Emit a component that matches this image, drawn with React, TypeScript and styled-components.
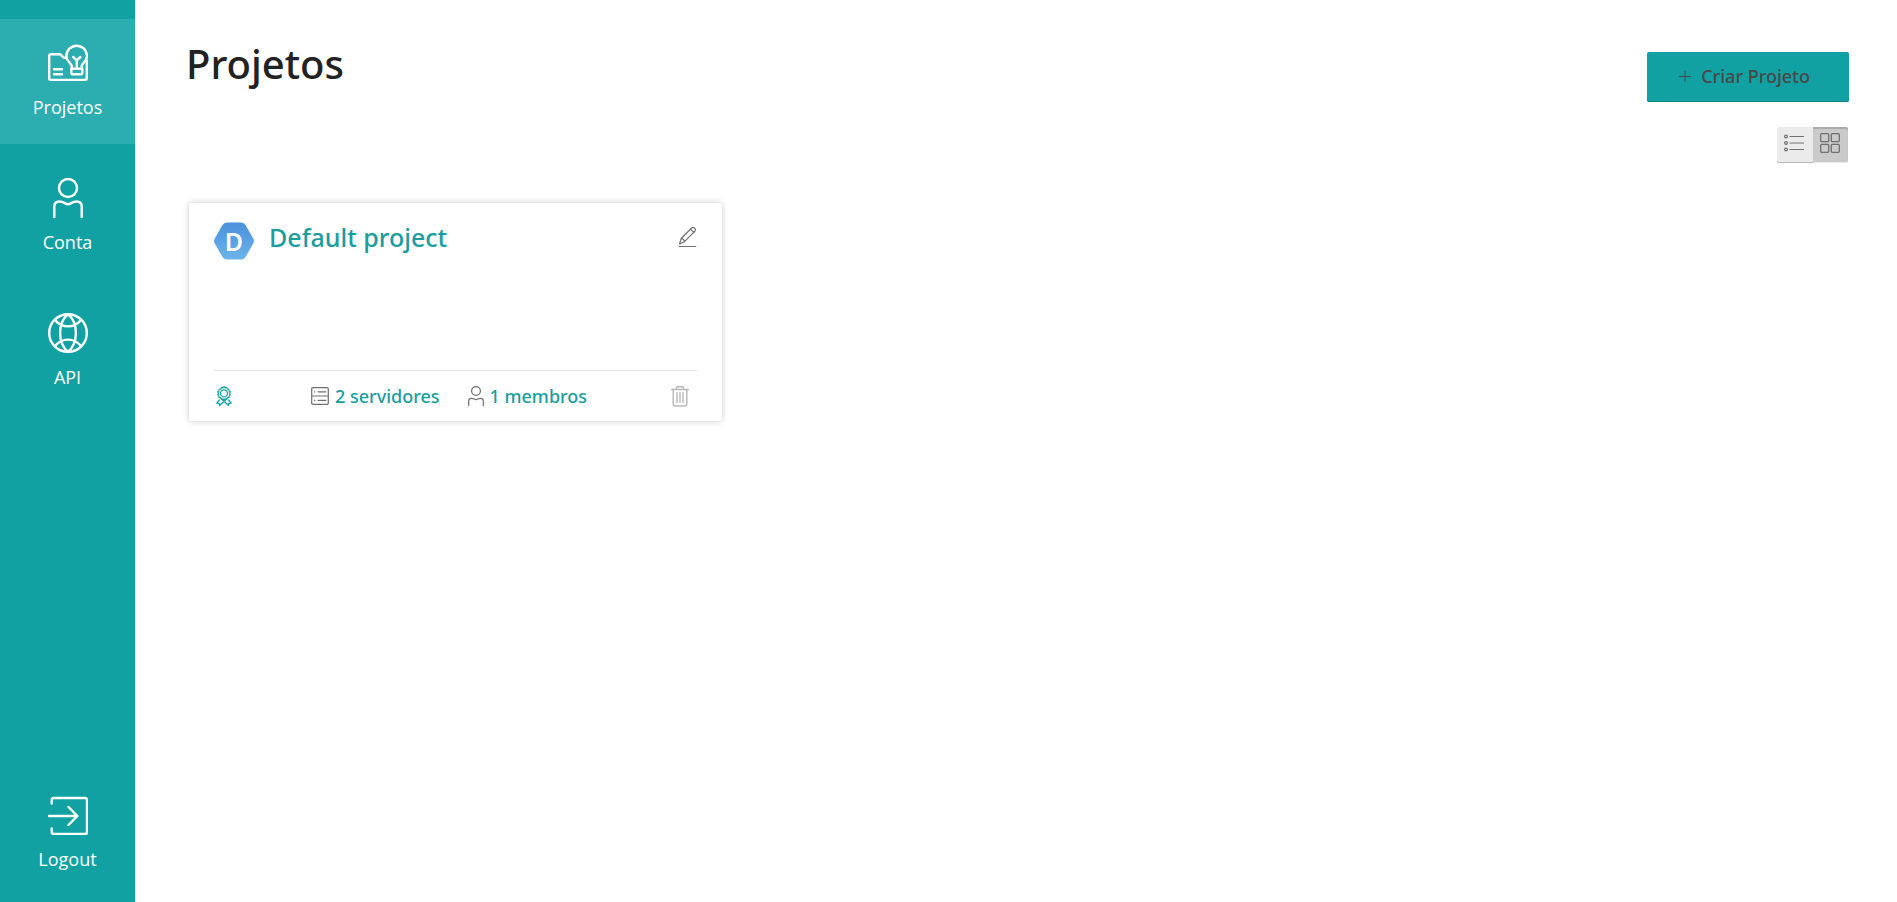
import React, { useState } from 'react';
import styled, { createGlobalStyle } from 'styled-components';

const TEAL = '#12a1a3';

const GlobalStyle = createGlobalStyle`
  * { box-sizing: border-box; }
  body {
    margin: 0;
    background: #fff;
    color: #222;
    font-family: 'Noto Sans', 'Open Sans', sans-serif;
    font-size: 18px;
    line-height: 24px;
  }
  a { color: inherit; text-decoration: none; }
  h1, h2 { margin: 0; font-weight: 500; }
  button { font: inherit; border: 0; cursor: pointer; }
  svg { display: block; fill: none; stroke: currentColor; flex: none; stroke-linecap: round; stroke-linejoin: round; }
`;

const Shell = styled.div`
  display: flex;
  min-height: 100vh;
`;

const Sidebar = styled.nav`
  flex: none;
  width: 135px;
  padding: 19px 0 6px;
  display: flex;
  flex-direction: column;
  gap: 10px;
  background: ${TEAL};
  color: #fff;
  font-family: 'Open Sans', 'Noto Sans', sans-serif;
`;

const NavItem = styled.a<{ $active?: boolean; $last?: boolean }>`
  display: flex;
  flex-direction: column;
  align-items: center;
  gap: 12px;
  height: 125px;
  padding-top: 24px;
  margin-top: ${(p) => (p.$last ? 'auto' : '0')};
  background: ${(p) => (p.$active ? '#2cadaf' : 'transparent')};
  svg { stroke-width: 2.4; }
`;

const Main = styled.main`
  flex: 1;
  min-width: 0;
  padding: 38px 48px 40px 51px;
`;

const Header = styled.header`
  display: flex;
  justify-content: space-between;
  align-items: flex-start;
`;

const Title = styled.h1`
  font-size: 40px;
  line-height: 52px;
`;

const CreateButton = styled.button`
  display: flex;
  align-items: center;
  gap: 10px;
  height: 50px;
  margin-top: 14px;
  padding: 0 39px 2px 32px;
  border-radius: 2px;
  background: ${TEAL};
  color: #484848;
  box-shadow: inset 0 -1px 0 #0d8587;
  font-weight: 500;
`;

const Toolbar = styled.div`
  display: flex;
  justify-content: flex-end;
  margin: 25px 1px 40px 0;
`;

const ViewButton = styled.button<{ $on: boolean }>`
  display: grid;
  place-items: center;
  width: ${(p) => (p.$on ? 35 : 36)}px;
  height: 36px;
  padding: 0 2px 4px 0;
  color: #707070;
  background: ${(p) => (p.$on ? '#cacaca' : '#ebebeb')};
  box-shadow: ${(p) => (p.$on ? 'inset 0 2px 1px #aaa, inset 0 -1px 0 #e8e8e8' : 'inset 0 -1px 0 #bbb')};
  &:first-child { border-radius: 2px 0 0 2px; }
  &:last-child { border-radius: 0 2px 2px 0; }
`;

const Grid = styled.div`
  display: grid;
  grid-template-columns: repeat(3, minmax(0, 1fr));
  gap: 30px;
  padding-left: 3px;
`;

const Card = styled.article`
  display: flex;
  flex-direction: column;
  justify-content: space-between;
  height: 218px;
  padding: 0 25px;
  border-radius: 3px;
  background: #fff;
  box-shadow: 0 0 6px rgba(0, 0, 0, 0.22);
`;

const CardHead = styled.div`
  display: flex;
  align-items: flex-start;
  padding-top: 18px;
`;

const Avatar = styled.svg`
  && { stroke: none; }
  margin-top: 1px;
  text {
    fill: #fff;
    font: 600 25px 'Noto Sans', sans-serif;
  }
`;

const CardTitle = styled.h2`
  flex: 1;
  margin-left: 15px;
  font-size: 25px;
  line-height: 32px;
  color: #1b9c9d;
`;

const IconButton = styled.button`
  padding: 0;
  margin-top: 5px;
  background: none;
  color: #707070;
`;

const CardFoot = styled.div`
  display: flex;
  align-items: center;
  height: 51px;
  border-top: 1px solid #e6e6e6;
  color: #1b9c9d;
  font-weight: 500;
`;

const Stat = styled.a`
  display: flex;
  align-items: center;
  gap: 6px;
  margin-right: 28px;
  svg { color: #707070; }
`;

const Badge = styled.span`
  width: 97px;
  color: ${TEAL};
`;

const TrashButton = styled(IconButton)`
  margin: 0 8px 0 auto;
  color: #b8b8b8;
`;

const ProjectsIcon = () => (
  <svg width="40" height="40" viewBox="0 0 40 40">
    <path d="M18.500 14.700h-2.700l-3.900-3.500H3.200q-2 0-2 2v21.700q0 2 2 2h33.600q2 0 2-2V17.500" />
    <path d="M23.800 25.800v-2.600c-1-3.400-5.400-5.200-5.400-10.200a10.300 10.300 0 0 1 20.600 0c0 5-4.400 6.800-5.400 10.200v2.600M23.300 25.800h11v3.900q0 1.600-1.600 1.600h-7.800q-1.600 0-1.600-1.600zM25.200 14l3.600 3.300 3.600-3.300M28.800 17.300v8.500M6 26.300h8M6 31.300h8" />
  </svg>
);

const AccountIcon = () => (
  <svg width="40" height="40" viewBox="0 0 40 40">
    <circle cx="20" cy="10" r="9" />
    <path d="M6.300 39V28.500c0-3 2-5 5-5 5 0 5.700 2.700 8.700 2.700s3.700-2.700 8.700-2.700c3 0 5 2 5 5V39" />
  </svg>
);

const ApiIcon = () => (
  <svg width="40" height="40" viewBox="0 0 40 40">
    <circle cx="20" cy="20" r="18.800" />
    <path d="M20 1.200c-10.500 8.500-10.500 29 0 37.600M20 1.200c10.500 8.500 10.500 29 0 37.600M7 7c7 8.500 19 8.500 26 0M7 33c7-8.500 19-8.500 26 0" />
  </svg>
);

const LogoutIcon = () => (
  <svg width="40" height="40" viewBox="0 0 40 40">
    <path d="M3.700 8.500V5q0-2 2-2H37q2 0 2 2v32q0 2-2 2H5.700q-2 0-2-2v-3.500M1 21h28M20.500 12l8.900 9-8.900 9" />
  </svg>
);

const PlusIcon = () => (
  <svg width="12" height="12" viewBox="0 0 12 12"><path d="M6 1v11M.5 6.500h11" /></svg>
);

const ListIcon = () => (
  <svg width="20" height="18" viewBox="0 0 20 18" strokeWidth="1.200">
    <circle cx="2" cy="2.500" r="1.400" /><circle cx="2" cy="9" r="1.400" /><circle cx="2" cy="15.500" r="1.400" />
    <path d="M6 2.500h14M6 9h14M6 15.500h14" />
  </svg>
);

const GridIcon = () => (
  <svg width="20" height="20" viewBox="0 0 20 20" strokeWidth="1.300">
    <rect x=".7" y=".7" width="8" height="8" rx="1" /><rect x="11.300" y=".7" width="8" height="8" rx="1" />
    <rect x=".7" y="11.300" width="8" height="8" rx="1" /><rect x="11.300" y="11.300" width="8" height="8" rx="1" />
  </svg>
);

const PencilIcon = () => (
  <svg width="19" height="22" viewBox="0 0 19 22" strokeWidth="1.200">
    <path d="M1.200 20.500h16.600M1.500 18l1.700-5.500L13.700 2q1.400-1.200 2.900.2 1.500 1.500.3 2.900L6.500 15.700zM12.500 3.200l3.500 3.500M3.200 12.500q2.700.3 3.300 3.200" />
  </svg>
);

const RosetteIcon = () => (
  <svg width="20" height="20" viewBox="0 0 20 20" strokeWidth="1.300">
    <path d="M10 .7q1 1.500 2.600.9.500 1.700 2.200 1.800-.2 1.700 1.400 2.500-1 1.500 0 2.900-1.500.9-1.300 2.600-1.700.1-2.300 1.700-1.600-.6-2.600.9-1-1.500-2.600-.9-.6-1.600-2.300-1.700.2-1.700-1.300-2.600 1-1.400 0-2.900 1.600-.8 1.400-2.500 1.700-.1 2.200-1.800Q9 2.200 10 .7z" />
    <circle cx="10" cy="7.400" r="3.500" />
    <path d="M5.500 14l-2.700 3.200 2.400.2.300 2.100L10 15.200l4.500 4.300.3-2.100 2.400-.2-2.700-3.200M7.500 13.300l2.500 1.900 2.500-1.900" />
  </svg>
);

const ServerIcon = () => (
  <svg width="18" height="18" viewBox="0 0 18 18" strokeWidth="1.200">
    <rect x=".7" y=".7" width="16.600" height="16.600" rx="1" />
    <path d="M1 9h16M3.500 4.800h.4M7 4.800h8M3.500 13.300h.4M7 13.300h8" />
  </svg>
);

const MemberIcon = () => (
  <svg width="16" height="20" viewBox="0 0 16 20" strokeWidth="1.200">
    <circle cx="8" cy="5" r="4.400" />
    <path d="M.7 19.500V15q0-2.700 2.700-2.700c2.500 0 2.900 1.300 4.600 1.300s2.100-1.300 4.600-1.300q2.700 0 2.700 2.700v4.500" />
  </svg>
);

const TrashIcon = () => (
  <svg width="18" height="21" viewBox="0 0 18 21" strokeWidth="1.400">
    <path d="M.8 3.500h16.400M5.500 3.300V2q0-1.200 1.200-1.200h4.600q1.200 0 1.200 1.200v1.300M2.200 3.700v14q0 2.300 2.300 2.300h9q2.300 0 2.300-2.300v-14M6 7v9.500M9 7v9.500M12 7v9.500" />
  </svg>
);

const ProjectAvatar = () => (
  <Avatar width="40" height="38" viewBox="0 0 40 38" aria-hidden="true">
    <defs>
      <linearGradient id="hexagon" x1="0" y1="0" x2="0" y2="1">
        <stop offset="0" stopColor="#4a90dc" />
        <stop offset="1" stopColor="#6ab4ea" />
      </linearGradient>
    </defs>
    <path fill="url(#hexagon)" d="M13 .5h14q3 0 4.500 2.500l7.700 13.500q1.400 2.500 0 5L31.500 35q-1.500 2.500-4.500 2.500H13q-3 0-4.500-2.500L.8 21.500q-1.400-2.500 0-5L8.500 3Q10 .5 13 .5z" />
    <text x="20" y="29" textAnchor="middle">D</text>
  </Avatar>
);

export default function App() {
  const [view, setView] = useState<'list' | 'grid'>('grid');
  return (
    <>
      <GlobalStyle />
      <Shell>
        <Sidebar>
          <NavItem href="#projetos" $active><ProjectsIcon />Projetos</NavItem>
          <NavItem href="#conta"><AccountIcon />Conta</NavItem>
          <NavItem href="#api"><ApiIcon />API</NavItem>
          <NavItem href="#logout" $last><LogoutIcon />Logout</NavItem>
        </Sidebar>
        <Main>
          <Header>
            <Title>Projetos</Title>
            <CreateButton type="button"><PlusIcon />Criar Projeto</CreateButton>
          </Header>
          <Toolbar>
            <ViewButton type="button" aria-label="Lista" $on={view === 'list'} onClick={() => setView('list')}><ListIcon /></ViewButton>
            <ViewButton type="button" aria-label="Grade" $on={view === 'grid'} onClick={() => setView('grid')}><GridIcon /></ViewButton>
          </Toolbar>
          <Grid>
            <Card>
              <CardHead>
                <ProjectAvatar />
                <CardTitle><a href="#default-project">Default project</a></CardTitle>
                <IconButton type="button" aria-label="Editar"><PencilIcon /></IconButton>
              </CardHead>
              <CardFoot>
                <Badge><RosetteIcon /></Badge>
                <Stat href="#servidores"><ServerIcon />2 servidores</Stat>
                <Stat href="#membros"><MemberIcon />1 membros</Stat>
                <TrashButton type="button" aria-label="Excluir"><TrashIcon /></TrashButton>
              </CardFoot>
            </Card>
          </Grid>
        </Main>
      </Shell>
    </>
  );
}
